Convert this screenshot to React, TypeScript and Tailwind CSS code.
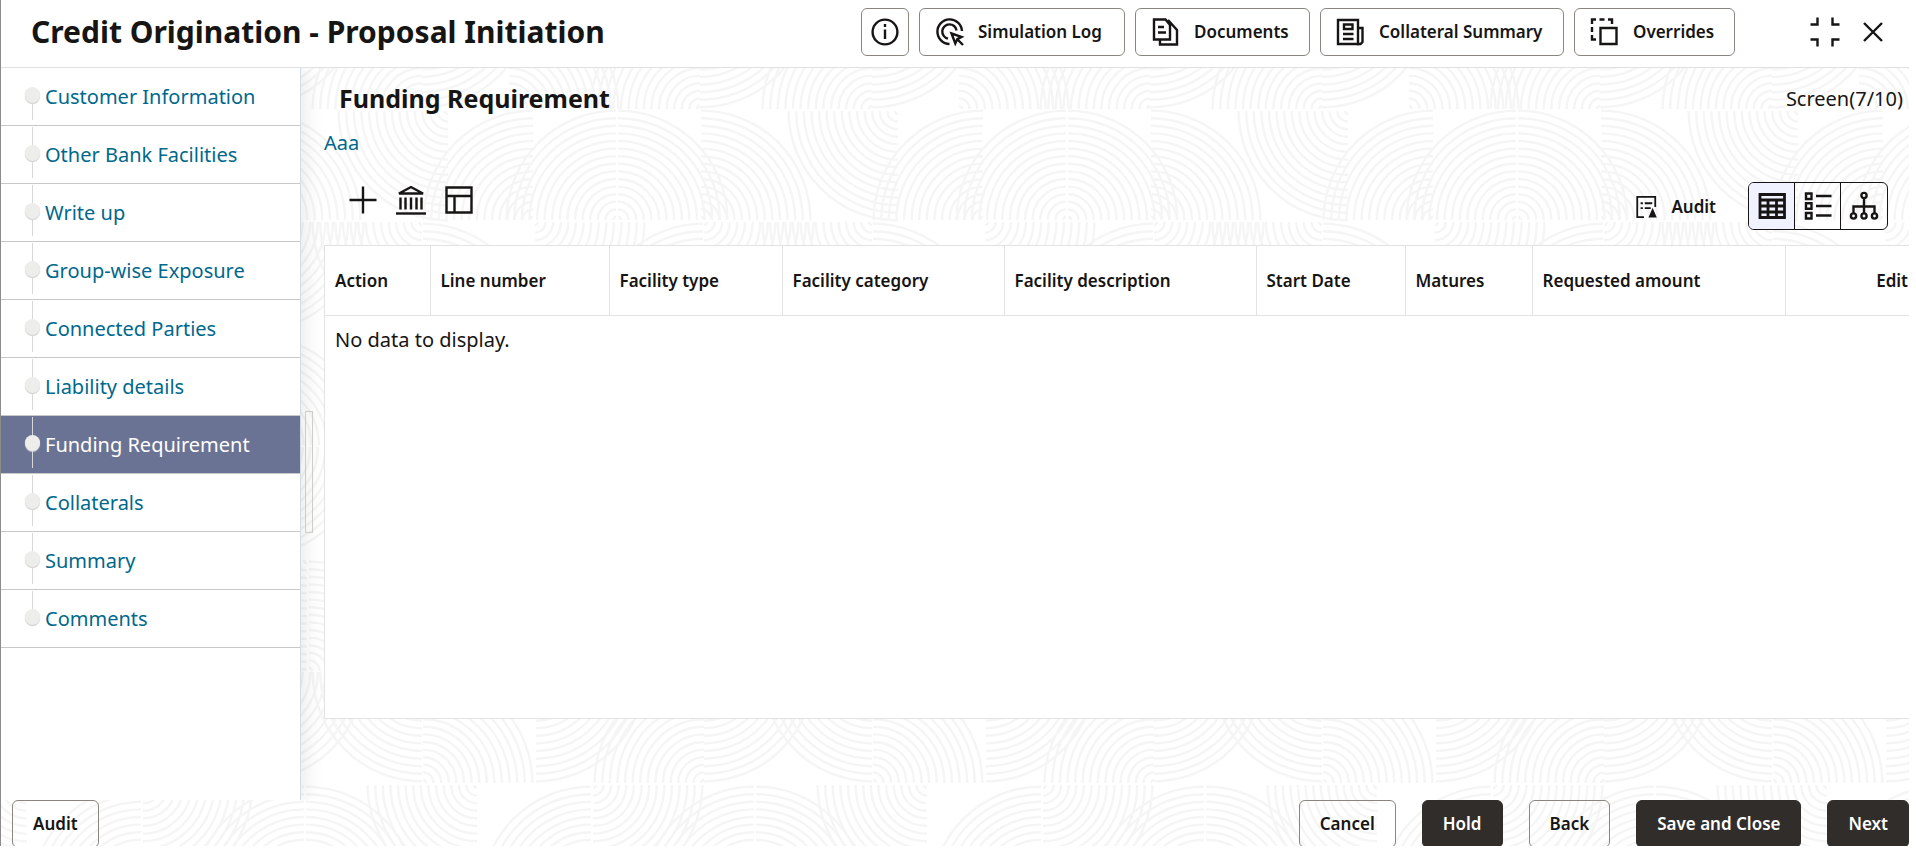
import type { ReactNode } from 'react';
import clsx from 'clsx';

const steps = [
  'Customer Information',
  'Other Bank Facilities',
  'Write up',
  'Group-wise Exposure',
  'Connected Parties',
  'Liability details',
  'Funding Requirement',
  'Collaterals',
  'Summary',
  'Comments',
];

const columns = [
  { label: 'Action', width: 'w-[105px]' },
  { label: 'Line number', width: 'w-[179px]' },
  { label: 'Facility type', width: 'w-[173px]' },
  { label: 'Facility category', width: 'w-[222px]' },
  { label: 'Facility description', width: 'w-[252px]' },
  { label: 'Start Date', width: 'w-[149px]' },
  { label: 'Matures', width: 'w-[127px]' },
  { label: 'Requested amount', width: 'w-[253px]' },
];

type Corner = 'ul' | 'ur' | 'll' | 'lr';

// quarter-circle ring groups: centre x, centre y, corner
const arcs: [number, number, Corner][] = [
  [421, 109, 'ul'], [421, -2, 'lr'], [508, 109, 'ur'], [699, 109, 'ul'], [699, -2, 'lr'],
  [700, 220, 'ur'], [447, 111, 'll'], [532, 220, 'ul'], [615, 220, 'ul'], [617, 220, 'ur'],
  [703, 222, 'lr'], [421, 222, 'll'], [422, 333, 'ur'], [534, 222, 'lr'], [702, 333, 'ul'],
  [702, 445, 'ul'], [704, 445, 'ur'], [534, 335, 'll'], [620, 445, 'ul'],
  [703, 447, 'lr'], [701, 447, 'll'], [590, 558, 'ur'],
  [756, 560, 'll'], [700, 671, 'ul'], [758, 671, 'ur'], [590, 560, 'lr'],
  [703, 783, 'ul'], [703, 672, 'lr'], [871, 672, 'll'], [872, 783, 'ur'], [535, 672, 'lr'],
  [590, 896, 'ul'], [592, 785, 'lr'], [753, 896, 'ul'], [755, 896, 'ur'], [476, 785, 'll'],
];

const rings = Array.from({ length: 15 }, (_, i) => 3 + i * 7.6);

function arcPath(cx: number, cy: number, corner: Corner) {
  const sx = corner[1] === 'l' ? -1 : 1;
  const sy = corner[0] === 'u' ? -1 : 1;
  const sweep = sx * sy > 0 ? 1 : 0;
  return rings.map((r) => `M${cx + sx * r} ${cy}A${r} ${r} 0 0 ${sweep} ${cx} ${cy + sy * r}`).join('');
}

function Backdrop() {
  return (
    <svg className="absolute inset-0 -z-10 h-full w-full" aria-hidden="true">
      <g fill="none" stroke="#f5f5f5" strokeWidth="2.4">
        {[-900, -450, 0, 450, 900, 1350].map((shift) => (
          <path key={shift} transform={`translate(${shift} 0)`} d={arcs.map((a) => arcPath(...a)).join('')} />
        ))}
      </g>
    </svg>
  );
}

function Icon({ children, className = 'size-8' }: { children: ReactNode; className?: string }) {
  return (
    <svg viewBox="0 0 32 32" className={clsx('shrink-0', className)} fill="none" stroke="currentColor" strokeWidth="2.4" aria-hidden="true">
      {children}
    </svg>
  );
}

const InfoIcon = () => (
  <Icon>
    <circle cx="16" cy="16" r="12.4" />
    <path d="M16 13.5V23M16 8v3" />
  </Icon>
);

const SimulationIcon = () => (
  <Icon>
    <path d="M28 15A12.3 12.3 0 1 0 15.5 28" />
    <path d="M22.6 14.5A7.2 7.2 0 1 0 14 22.6" />
    <path d="M17.5 17.5l10 3.4-4.2 2.2-2 4.4zM23 23l6 6" />
  </Icon>
);

const DocumentsIcon = () => (
  <Icon>
    <path d="M4 3.5h11.5l4.5 5.5v14.5H4zM10 23.5v5h17V14l-9-10" />
    <path d="M8 11h6M8 16.5h8" />
  </Icon>
);

const CollateralIcon = () => (
  <Icon>
    <path d="M3 4h20v24H3z" />
    <path d="M9 8.5h8.500v4.500H9zM8 18h10.500M8 23h10.500" />
    <path d="M23 12h4.500v14l-2 2H22" />
  </Icon>
);

const OverridesIcon = () => (
  <Icon>
    <path d="M3 8V3.5h4M10.500 3.5h5M19 3.5h4V8M3 11v5M3 19v4.500h4" />
    <path d="M11.500 12h16v16h-16z" />
  </Icon>
);

const CollapseIcon = () => (
  <Icon>
    <path d="M1.500 8.500H8.500V1.500M23.500 1.500v7H30.500M1.500 23.500h7V30.500M23.500 30.500v-7H30.500" />
  </Icon>
);

const CloseIcon = () => (
  <Icon>
    <path d="M7 7l18 18M25 7L7 25" />
  </Icon>
);

const PlusIcon = () => (
  <Icon>
    <path d="M16 2.500v27M2.500 16h27" />
  </Icon>
);

const BankIcon = () => (
  <Icon>
    <path d="M4 9.500L16 3l12 6.500z" />
    <path d="M5.500 13.500v12M10.500 13.500v12M16 13.500v12M21.500 13.500v12M26.500 13.500v12" />
    <path d="M1 29.500h30" />
  </Icon>
);

const LayoutIcon = () => (
  <Icon>
    <path d="M3.500 3.500h25v25h-25zM3.500 12h25M11.500 12v16.500" />
  </Icon>
);

const AuditIcon = () => (
  <Icon className="size-6">
    <path d="M12 29.500H3v-27h24V16" />
    <path d="M7.500 11h3M13 11h10M7.500 17.500h3M13 17.500h8" />
    <path d="M23.500 17l5.500 13H18z" fill="currentColor" stroke="none" />
  </Icon>
);

const TableIcon = () => (
  <Icon>
    <path d="M4 4.500h24.500v23H4zM4 10h24.500M4 16h24.500M4 22h24.500M12 10v17.500M20.500 10v17.500" strokeWidth="2.800" />
  </Icon>
);

const ListIcon = () => (
  <Icon>
    <path d="M4 3.500h5.500V9H4zM4 13.200h5.500v5.500H4zM4 23h5.500v5.500H4zM14 6h15.500M14 16h15.500M14 25.500h15.500" />
  </Icon>
);

const TreeIcon = () => (
  <Icon>
    <circle cx="16" cy="5.500" r="2.600" />
    <circle cx="5.500" cy="26" r="2.600" />
    <circle cx="16" cy="26" r="2.600" />
    <circle cx="26.500" cy="26" r="2.600" />
    <path d="M16 8v15.500M5.500 23.500v-7h21v7" />
  </Icon>
);

const headerActions = [
  { label: 'Simulation Log', icon: <SimulationIcon />, width: 'w-[206px]' },
  { label: 'Documents', icon: <DocumentsIcon />, width: 'w-[175px]' },
  { label: 'Collateral Summary', icon: <CollateralIcon />, width: 'w-[244px]' },
  { label: 'Overrides', icon: <OverridesIcon />, width: 'w-[161px]' },
];

const footerActions = [
  { label: 'Cancel', primary: false },
  { label: 'Hold', primary: true },
  { label: 'Back', primary: false },
  { label: 'Save and Close', primary: true },
  { label: 'Next', primary: true },
];

const views = [
  { label: 'Table view', icon: <TableIcon /> },
  { label: 'List view', icon: <ListIcon /> },
  { label: 'Tree view', icon: <TreeIcon /> },
];

function Header() {
  return (
    <header className="flex h-[68px] shrink-0 items-center border-b border-[#e0e0e0] bg-white pr-5 pb-1 pl-[30px]">
      <h1 className="text-[30px] font-bold">Credit Origination - Proposal Initiation</h1>
      <div className="ml-auto flex gap-[10px]">
        <button aria-label="Information" className="flex size-12 items-center justify-center rounded-md border border-[#8b8580]">
          <InfoIcon />
        </button>
        {headerActions.map((action) => (
          <button
            key={action.label}
            className={clsx('flex h-12 items-center gap-3 rounded-md border border-[#8b8580] pl-[14px] text-[17px] font-semibold whitespace-nowrap', action.width)}
          >
            {action.icon}
            {action.label}
          </button>
        ))}
      </div>
      <div className="ml-[74px] flex items-center gap-4">
        <button aria-label="Collapse"><CollapseIcon /></button>
        <button aria-label="Close"><CloseIcon /></button>
      </div>
    </header>
  );
}

function Sidebar() {
  return (
    <nav className="w-[300px] shrink-0 border-r border-[#d3dde6] bg-white shadow-[2px_0_20px_rgba(0,0,0,0.1)]">
      <ul>
        {steps.map((step, i) => {
          const active = step === 'Funding Requirement';
          return (
            <li key={step} className="h-[58px] border-b border-[#c8c8c8]">
              <a
                href="#"
                aria-current={active ? 'step' : undefined}
                className={clsx('flex h-full items-center gap-[5px] pl-6 text-[20px]', active ? 'bg-[#6b7394] text-white' : 'text-[#00688c]')}
              >
                <span className="flex h-full flex-col items-center py-px">
                  <span className={clsx('w-px flex-1', i > 0 && 'bg-[#d8d8d8]')} />
                  <span className="h-4 w-[15px] rounded-full bg-[#ededeb] shadow-[0_1px_1px_#c9c9c9]" />
                  <span className={clsx('mb-1 w-px flex-1', i < steps.length - 1 && 'bg-[#d8d8d8]')} />
                </span>
                {step}
              </a>
            </li>
          );
        })}
      </ul>
    </nav>
  );
}

function Toolbar() {
  return (
    <div className="flex h-[73px] items-start pr-[21px] pl-[23px]">
      <div className="flex gap-4 pt-3">
        <button aria-label="Add"><PlusIcon /></button>
        <button aria-label="Bank"><BankIcon /></button>
        <button aria-label="Layout"><LayoutIcon /></button>
      </div>
      <button className="mt-[22px] ml-auto flex items-center gap-3 text-[17px] font-semibold">
        <AuditIcon />
        Audit
      </button>
      <div className="mt-[10px] ml-8 flex divide-x divide-[#161513] overflow-hidden rounded-md border border-[#161513]">
        {views.map((view, i) => (
          <button
            key={view.label}
            aria-label={view.label}
            aria-pressed={i === 0}
            className={clsx('flex h-[46px] w-[46px] items-center justify-center', i === 0 && 'bg-[#f1f2ff]')}
          >
            {view.icon}
          </button>
        ))}
      </div>
    </div>
  );
}

function FacilityTable() {
  return (
    <div className="min-h-0 flex-1 border-y border-l border-[#e3e3e3] bg-white">
      <table className="w-full table-fixed border-collapse text-left">
        <thead className="h-[69px] border-b border-[#e3e3e3] text-[17px]">
          <tr>
            {columns.map((column) => (
              <th key={column.label} className={clsx('border-r border-[#e3e3e3] pl-[10px] font-semibold', column.width)}>
                {column.label}
              </th>
            ))}
            <th className="pr-px text-right font-semibold">Edit</th>
          </tr>
        </thead>
        <tbody>
          <tr>
            <td colSpan={9} className="h-[50px] pl-[10px] text-[20px]">No data to display.</td>
          </tr>
        </tbody>
      </table>
    </div>
  );
}

export default function App() {
  return (
    <div className="h-screen bg-white pr-[7px] pb-3 font-['Noto_Sans',sans-serif] text-[#161513]">
      <div className="relative isolate flex h-full flex-col overflow-hidden border-l border-[#8c8c8c]">
        <Backdrop />
        <Header />
        <div className="flex min-h-0 flex-1 overflow-hidden">
          <Sidebar />
          <div className="flex w-[23px] shrink-0 items-center pl-1">
            <div className="mt-[76px] h-[122px] w-2 border border-[#cfcdc8]" />
          </div>
          <main className="flex min-w-0 flex-1 flex-col pb-[81px]">
            <div className="flex h-[60px] items-center justify-between pt-px pr-[6px] pl-[15px]">
              <h2 className="text-[25px] font-bold">Funding Requirement</h2>
              <p className="text-[20px]">Screen(7/10)</p>
            </div>
            <a href="#" className="flex h-11 items-start text-[20px] text-[#00688c]">Aaa</a>
            <Toolbar />
            <FacilityTable />
          </main>
        </div>
        <footer className="flex h-[46px] shrink-0 items-start gap-[26px] overflow-hidden pl-[11px] text-[17px] font-semibold">
          <button className="mr-auto h-12 shrink-0 rounded-md border border-[#8b8580] px-5">Audit</button>
          {footerActions.map((action) => (
            <button
              key={action.label}
              className={clsx('h-12 shrink-0 rounded-md border px-5', action.primary ? 'border-[#312d2a] bg-[#312d2a] text-white' : 'border-[#8b8580]')}
            >
              {action.label}
            </button>
          ))}
        </footer>
      </div>
    </div>
  );
}
